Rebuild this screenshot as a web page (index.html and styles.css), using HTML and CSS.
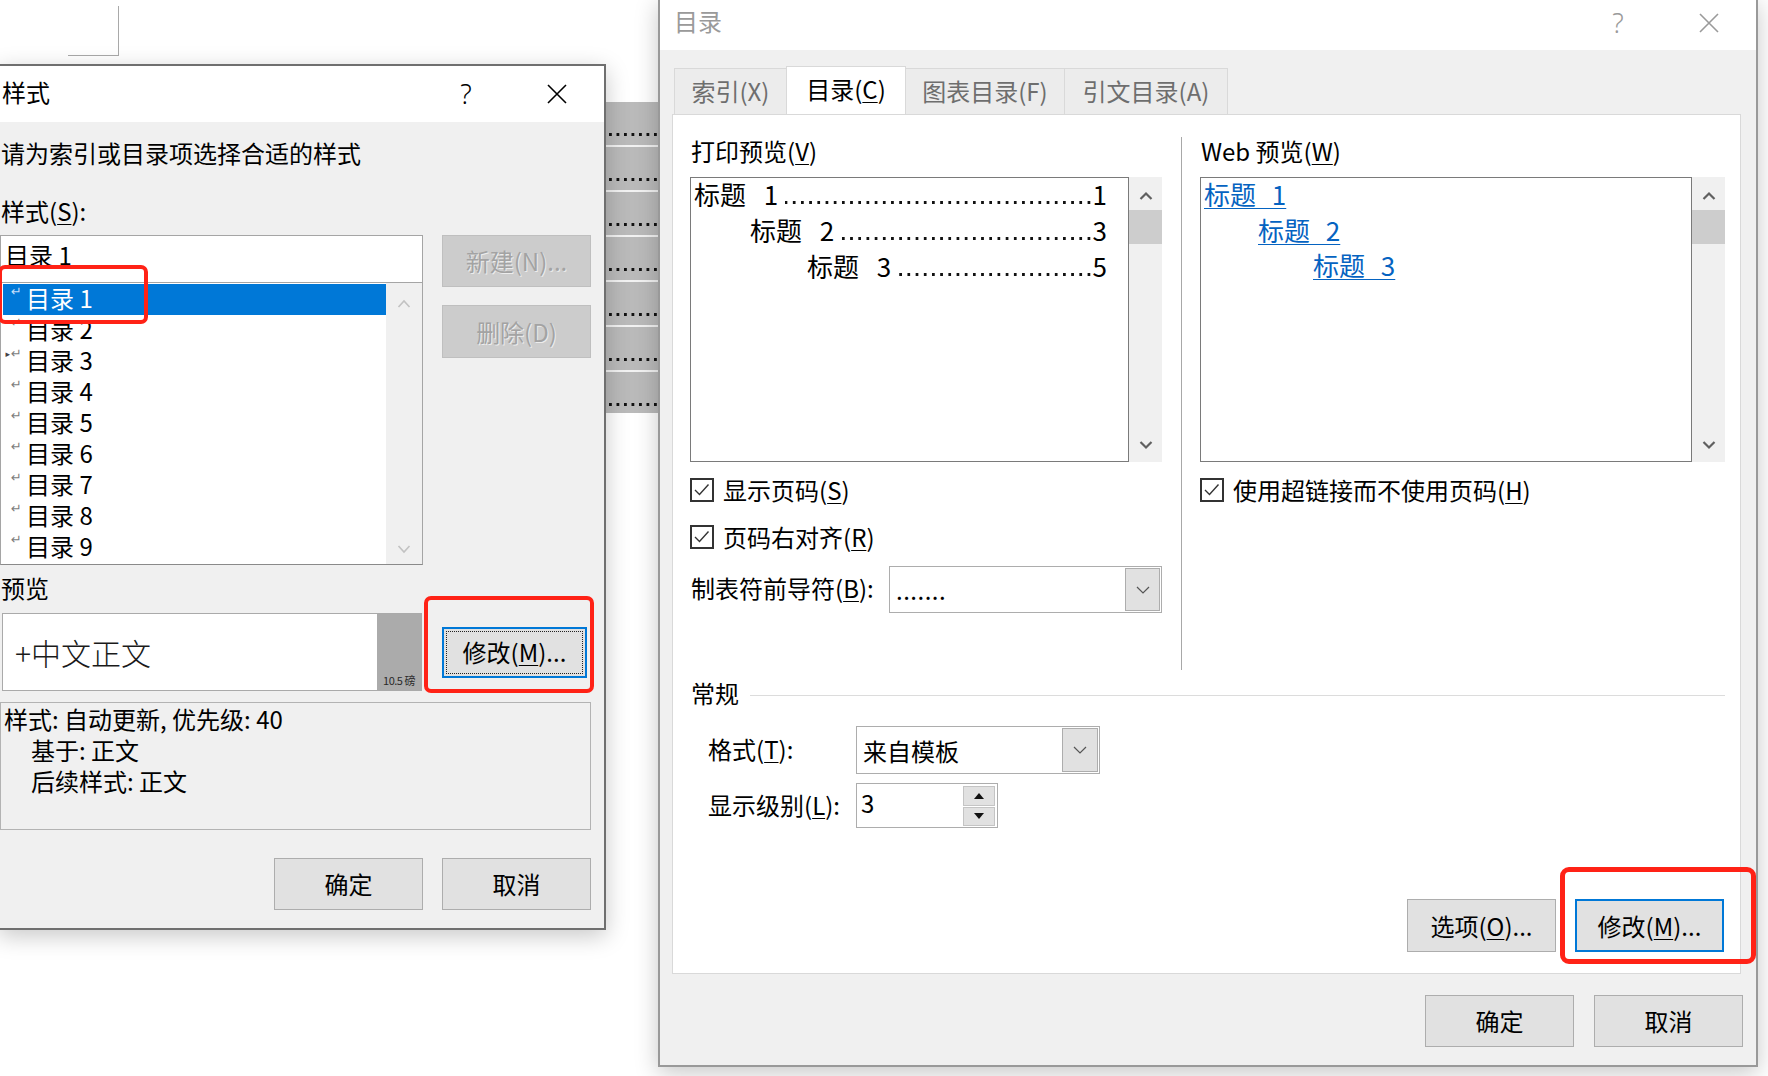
FILE: index.html
```html
<!DOCTYPE html>
<html lang="zh-CN">
<head>
<meta charset="utf-8">
<title>目录</title>
<link rel="stylesheet" href="styles.css">
</head>
<body>
<div class="desktop">
  <div class="page-corner"></div>
  <div class="doc-band">
    <div class="band-row"></div>
    <div class="band-row"></div>
    <div class="band-row"></div>
    <div class="band-row"></div>
    <div class="band-row"></div>
    <div class="band-row"></div>
    <div class="band-row last"></div>
  </div>

  <section class="dlg dlg-styles">
    <header class="titlebar tb-styles">
      <span class="tb-title">样式</span>
      <span class="tb-help">?</span>
      <span class="tb-close"><svg width="20" height="20" viewBox="0 0 20 20"><path d="M1 1L19 19M19 1L1 19" stroke="#000" stroke-width="1.6" fill="none"/></svg></span>
    </header>
    <div class="s-body">
      <div class="s-prompt">请为索引或目录项选择合适的样式</div>
      <div class="s-label">样式(<u>S</u>):</div>
      <div class="s-grid">
        <div class="s-pick">
          <div class="s-input">目录 1</div>
          <div class="s-list">
            <ul class="s-items">
              <li class="sel"><span class="mk">↵</span><span class="it">目录 1</span></li>
              <li><span class="mk">↵</span><span class="it">目录 2</span></li>
              <li><span class="mk"><i class="tri">▸</i>↵</span><span class="it">目录 3</span></li>
              <li><span class="mk">↵</span><span class="it">目录 4</span></li>
              <li><span class="mk">↵</span><span class="it">目录 5</span></li>
              <li><span class="mk">↵</span><span class="it">目录 6</span></li>
              <li><span class="mk">↵</span><span class="it">目录 7</span></li>
              <li><span class="mk">↵</span><span class="it">目录 8</span></li>
              <li><span class="mk">↵</span><span class="it">目录 9</span></li>
            </ul>
            <div class="s-scroll">
              <svg width="14" height="9" viewBox="0 0 14 9"><polyline points="1.5,8 7,2 12.5,8" fill="none" stroke="#c2c2c2" stroke-width="1.6"/></svg>
              <svg width="14" height="9" viewBox="0 0 14 9"><polyline points="1.5,1 7,7 12.5,1" fill="none" stroke="#c2c2c2" stroke-width="1.6"/></svg>
            </div>
          </div>
        </div>
        <div class="s-side">
          <div class="btn disabled btn-new">新建(N)...</div>
          <div class="btn disabled btn-del">删除(D)</div>
        </div>
      </div>
      <div class="s-label s-plabel">预览</div>
      <div class="s-prow">
        <div class="s-pbox">
          <span class="s-ptext">+中文正文</span>
          <div class="s-pstrip"><span>10.5 磅</span></div>
        </div>
        <div class="btn focus s-mod"><span class="focus-rect">修改(<u>M</u>)...</span></div>
      </div>
      <div class="s-desc">
        <div class="d1">样式: 自动更新, 优先级: 40</div>
        <div class="d2">基于: 正文</div>
        <div class="d2">后续样式: 正文</div>
      </div>
      <div class="s-foot">
        <div class="btn fbtn">确定</div>
        <div class="btn fbtn">取消</div>
      </div>
    </div>
  </section>

  <section class="dlg dlg-toc">
    <header class="titlebar tb-toc">
      <span class="tb-title">目录</span>
      <span class="tb-help">?</span>
      <span class="tb-close"><svg width="20" height="20" viewBox="0 0 20 20"><path d="M1 1L19 19M19 1L1 19" stroke="#9a9a9a" stroke-width="1.6" fill="none"/></svg></span>
    </header>
    <div class="t-body">
      <div class="tabs">
        <div class="tab t1">索引(X)</div>
        <div class="tab t2 active">目录(<u>C</u>)</div>
        <div class="tab t3">图表目录(F)</div>
        <div class="tab t4">引文目录(A)</div>
      </div>
      <div class="panel">
        <div class="p-top">
          <div class="p-col p-print">
            <div class="p-label">打印预览(<u>V</u>)</div>
            <div class="pv">
              <div class="pv-box">
                <div class="pl l1"><span>标题 1</span><span class="ld"></span><span>1</span></div>
                <div class="pl l2"><span>标题 2</span><span class="ld"></span><span>3</span></div>
                <div class="pl l3"><span>标题 3</span><span class="ld"></span><span>5</span></div>
              </div>
              <div class="pv-scroll">
                <svg class="up" width="14" height="9" viewBox="0 0 14 9"><polyline points="1.5,8 7,2.5 12.5,8" fill="none" stroke="#606060" stroke-width="2.2"/></svg>
                <div class="thumb"></div>
                <div class="gap"></div>
                <svg class="dn" width="14" height="9" viewBox="0 0 14 9"><polyline points="1.5,1 7,6.5 12.5,1" fill="none" stroke="#606060" stroke-width="2.2"/></svg>
              </div>
            </div>
            <div class="cb cb1">
              <svg width="24" height="24" viewBox="0 0 24 24"><rect x="1" y="1" width="22" height="22" fill="#fff" stroke="#333" stroke-width="2"/><polyline points="5,12 9.5,16.5 18.5,6.5" fill="none" stroke="#333" stroke-width="1.4"/></svg>
              <span>显示页码(<u>S</u>)</span>
            </div>
            <div class="cb cb2">
              <svg width="24" height="24" viewBox="0 0 24 24"><rect x="1" y="1" width="22" height="22" fill="#fff" stroke="#333" stroke-width="2"/><polyline points="5,12 9.5,16.5 18.5,6.5" fill="none" stroke="#333" stroke-width="1.4"/></svg>
              <span>页码右对齐(<u>R</u>)</span>
            </div>
            <div class="leader-row">
              <span class="lr-label">制表符前导符(<u>B</u>):</span>
              <div class="combo lr-combo">
                <span class="combo-val dots">.......</span>
                <span class="combo-btn"><svg width="14" height="8" viewBox="0 0 14 8"><polyline points="1,1 7,7 13,1" fill="none" stroke="#555" stroke-width="1.2"/></svg></span>
              </div>
            </div>
          </div>
          <div class="p-div"></div>
          <div class="p-col p-web">
            <div class="p-label">Web 预览(<u>W</u>)</div>
            <div class="pv">
              <div class="pv-box web">
                <div class="wl w1"><a>标题 1</a></div>
                <div class="wl w2"><a>标题 2</a></div>
                <div class="wl w3"><a>标题 3</a></div>
              </div>
              <div class="pv-scroll">
                <svg class="up" width="14" height="9" viewBox="0 0 14 9"><polyline points="1.5,8 7,2.5 12.5,8" fill="none" stroke="#606060" stroke-width="2.2"/></svg>
                <div class="thumb"></div>
                <div class="gap"></div>
                <svg class="dn" width="14" height="9" viewBox="0 0 14 9"><polyline points="1.5,1 7,6.5 12.5,1" fill="none" stroke="#606060" stroke-width="2.2"/></svg>
              </div>
            </div>
            <div class="cb cb1">
              <svg width="24" height="24" viewBox="0 0 24 24"><rect x="1" y="1" width="22" height="22" fill="#fff" stroke="#333" stroke-width="2"/><polyline points="5,12 9.5,16.5 18.5,6.5" fill="none" stroke="#333" stroke-width="1.4"/></svg>
              <span>使用超链接而不使用页码(<u>H</u>)</span>
            </div>
          </div>
        </div>
        <div class="g-head"><span>常规</span><i class="g-line"></i></div>
        <div class="g-row g-fmt">
          <span class="g-label">格式(<u>T</u>):</span>
          <div class="combo fmt-combo">
            <span class="combo-val">来自模板</span>
            <span class="combo-btn"><svg width="14" height="8" viewBox="0 0 14 8"><polyline points="1,1 7,7 13,1" fill="none" stroke="#555" stroke-width="1.2"/></svg></span>
          </div>
        </div>
        <div class="g-row g-lvl">
          <span class="g-label">显示级别(<u>L</u>):</span>
          <div class="spin">
            <span class="spin-val">3</span>
            <div class="spin-btns">
              <span class="sb"><svg width="10" height="6" viewBox="0 0 10 6"><polygon points="5,0 10,6 0,6" fill="#111"/></svg></span>
              <span class="sb"><svg width="10" height="6" viewBox="0 0 10 6"><polygon points="0,0 10,0 5,6" fill="#111"/></svg></span>
            </div>
          </div>
        </div>
        <div class="p-btns">
          <div class="btn pbtn">选项(<u>O</u>)...</div>
          <div class="btn pbtn focus">修改(<u>M</u>)...</div>
        </div>
      </div>
      <div class="t-foot">
        <div class="btn tbtn">确定</div>
        <div class="btn tbtn">取消</div>
      </div>
    </div>
  </section>

  <div class="mark-box mb1"></div>
  <div class="mark-box mb2"></div>
  <div class="mark-box mb3"></div>
</div>
</body>
</html>
```

FILE: styles.css
```css
* { box-sizing: border-box; }
html, body { margin: 0; padding: 0; }
body {
  width: 1768px;
  height: 1076px;
  overflow: hidden;
  background: #ffffff;
  font-family: "Noto Sans CJK SC", "Noto Sans", sans-serif;
  font-size: 24px;
  color: #000;
}
u { text-decoration-thickness: 1px; text-underline-offset: 3px; }

.desktop {
  position: relative;
  width: 1768px;
  height: 1076px;
  overflow: hidden;
  background: #fff;
}

/* background document */
.page-corner {
  position: absolute;
  left: 68px;
  top: 6px;
  width: 51px;
  height: 50px;
  border-right: 1px solid #a9a9a9;
  border-bottom: 1px solid #a9a9a9;
}
.doc-band {
  position: absolute;
  left: 604px;
  top: 102px;
  width: 56px;
  display: flex;
  flex-direction: column;
}
.band-row {
  height: 45px;
  border-bottom: 2px solid #f2f2f2;
  background-color: #bababa;
  background-image: linear-gradient(90deg, #111 2.6px, transparent 2.6px);
  background-size: 7.5px 3px;
  background-repeat: repeat-x;
  background-position: 5px 31px;
}
.band-row.last { height: 41px; border-bottom: none; }

/* dialogs */
.dlg {
  position: absolute;
  background: #f0f0f0;
  box-shadow: 0 6px 22px rgba(0,0,0,0.22);
}
.dlg-styles {
  left: -2px;
  top: 64px;
  width: 608px;
  height: 866px;
  border: 2px solid #6f6f6f;
  z-index: 2;
}
.dlg-toc {
  left: 658px;
  top: -2px;
  width: 1100px;
  height: 1069px;
  border: 2px solid #999;
  z-index: 1;
}

.titlebar {
  display: flex;
  align-items: center;
  background: #fff;
}
.tb-styles { height: 56px; padding-left: 2px; }
.tb-toc { height: 50px; padding-left: 14px; padding-bottom: 5px; }
.tb-title { flex: 1; line-height: 28px; padding-bottom: 4px; }
.tb-toc .tb-title { color: #9a9a9a; }
.tb-help {
  width: 40px;
  text-align: center;
  font-family: "Noto Sans", sans-serif;
  font-weight: 300;
  font-size: 27px;
  line-height: 32px;
}
.tb-toc .tb-help { color: #9a9a9a; }
.tb-close {
  width: 40px;
  margin-left: 51px;
  margin-right: 27px;
  display: flex;
  justify-content: center;
  align-items: center;
}

/* ---------- styles dialog body ---------- */
.s-body {
  display: flex;
  flex-direction: column;
  padding-right: 13px;
}
.s-prompt { margin-top: 17px; line-height: 28px; padding-bottom: 4px; padding-left: 1px; }
.s-label { margin-top: 26px; line-height: 28px; padding-bottom: 4px; padding-left: 1px; }
.s-grid {
  margin-top: 6px;
  display: grid;
  grid-template-columns: 423px 149px;
  column-gap: 19px;
}
.s-pick { display: flex; flex-direction: column; }
.s-input {
  height: 48px;
  background: #fff;
  border: 1px solid #a5a5a5;
  line-height: 38px;
  padding-bottom: 6px;
  padding-left: 4px;
}
.s-list {
  margin-top: -1px;
  height: 283px;
  background: #fff;
  border: 1px solid #a5a5a5;
  border-bottom-color: #8a8a8a;
  display: flex;
}
.s-items {
  list-style: none;
  margin: 0;
  padding: 1px 0 0 2px;
  width: 385px;
}
.s-items li {
  height: 31px;
  display: flex;
  white-space: pre;
}
.s-items li .it { line-height: 27px; }
.s-items li.sel { background: #0078d7; color: #fff; }
.mk {
  width: 23px;
  font-family: "DejaVu Sans", sans-serif;
  font-size: 13px;
  line-height: 15px;
  color: #7d7d7d;
  display: flex;
  justify-content: flex-end;
  padding-right: 4px;
}
.sel .mk { color: #c4defa; }
.tri { font-style: normal; font-size: 9px; color: #444; margin-right: 1px; line-height: 17px; }
.s-scroll {
  flex: 1;
  background: #f0f0f0;
  display: flex;
  flex-direction: column;
  align-items: center;
  justify-content: space-between;
  padding: 16px 0 10px;
}
.s-side { display: flex; flex-direction: column; gap: 18px; }
.btn {
  display: flex;
  align-items: center;
  justify-content: center;
  background: #e1e1e1;
  border: 1px solid #adadad;
  line-height: 32px;
  white-space: nowrap;
}
.btn.disabled {
  background: #cccccc;
  border-color: #bfbfbf;
  color: #a3a3a3;
  text-shadow: 1px 1px 0 #ececec;
}
.btn-new { height: 52px; }
.btn-del { height: 53px; }
.btn.focus { border: 2px solid #0078d7; }
.s-plabel { margin-top: 9px; }
.s-prow {
  margin-top: 7px;
  height: 78px;
  display: flex;
  align-items: center;
}
.s-pbox {
  margin-left: 2px;
  width: 420px;
  height: 78px;
  background: #fff;
  border: 1px solid #aaaaaa;
  display: flex;
  align-items: center;
}
.s-ptext {
  flex: 1;
  padding-left: 12px;
  font-size: 30px;
  font-weight: 300;
  color: #1a1a1a;
  line-height: 40px;
}
.s-pstrip {
  width: 44px;
  height: 100%;
  background: #ababab;
  display: flex;
  align-items: flex-end;
  justify-content: center;
  padding-bottom: 3px;
}
.s-pstrip span {
  font-size: 11px;
  line-height: 14px;
  color: #2a2a2a;
  white-space: nowrap;
  letter-spacing: -0.5px;
}
.s-mod {
  margin-left: 20px;
  width: 145px;
  height: 51px;
  padding: 2px;
}
.focus-rect {
  flex: 1;
  height: 100%;
  border: 1px dotted #222;
  display: flex;
  align-items: center;
  justify-content: center;
}
.s-desc {
  margin-top: 11px;
  height: 128px;
  border: 1px solid #b3b3b3;
  padding-top: 0;
  line-height: 31px;
}
.s-desc .d1 { padding-left: 3px; }
.s-desc .d2 { padding-left: 30px; }
.s-foot {
  margin-top: 28px;
  display: flex;
  justify-content: flex-end;
  gap: 19px;
}
.fbtn { width: 149px; height: 52px; }

/* ---------- toc dialog body ---------- */
.t-body { display: flex; flex-direction: column; }
.tabs {
  margin-top: 16px;
  margin-left: 14px;
  height: 49px;
  display: flex;
  align-items: flex-end;
}
.tab {
  height: 47px;
  background: #ececec;
  border: 1px solid #d9d9d9;
  border-bottom: none;
  display: flex;
  align-items: center;
  justify-content: center;
  color: #6e6e6e;
  line-height: 32px;
  padding-bottom: 2px;
}
.tab + .tab { margin-left: -1px; }
.tab.t1 { width: 113px; }
.tab.t2 { width: 120px; }
.tab.t3 { width: 160px; }
.tab.t4 { width: 164px; }
.tab.active {
  height: 49px;
  background: #fff;
  color: #000;
  padding-bottom: 4px;
}
.panel {
  margin-top: -1px;
  margin-left: 12px;
  width: 1069px;
  height: 860px;
  background: #fff;
  border: 1px solid #d9d9d9;
  padding: 22px 15px 0 17px;
  display: flex;
  flex-direction: column;
}
.p-top {
  height: 533px;
  display: grid;
  grid-template-columns: 472px 38px 525px;
}
.p-col { display: flex; flex-direction: column; }
.p-div { width: 1px; justify-self: center; background: #a8a8a8; }
.p-label { line-height: 28px; padding-bottom: 4px; padding-left: 1px; }
.pv {
  margin-top: 8px;
  height: 285px;
  display: flex;
}
.pv-box {
  flex: 1;
  background: #fff;
  border: 1px solid #7a7a7a;
  padding: 0 21px 0 3px;
  font-size: 26px;
}
.pv-scroll {
  width: 33px;
  background: #f0f0f0;
  display: flex;
  flex-direction: column;
  align-items: center;
}
.pv-scroll .up { margin-top: 14px; }
.pv-scroll .thumb {
  margin-top: 10px;
  align-self: stretch;
  height: 34px;
  background: #cdcdcd;
}
.pv-scroll .gap { flex: 1; }
.pv-scroll .dn { margin-bottom: 12px; }
.pl {
  height: 36px;
  line-height: 32px;
  padding-bottom: 4px;
  display: flex;
  align-items: baseline;
  word-spacing: 12px;
  white-space: pre;
}
.pl .ld {
  flex: 1;
  height: 3px;
  margin: 0 2px 0 7px;
  background-image: linear-gradient(90deg, transparent 5.2px, #111 5.2px);
  background-size: 8.2px 3px;
  background-repeat: repeat-x;
  background-position: right top;
  position: relative;
  top: -1px;
}
.l2 { padding-left: 56px; }
.l3 { padding-left: 113px; }
.wl {
  height: 35.5px;
  line-height: 32px;
  padding-bottom: 4px;
  word-spacing: 10px;
  white-space: pre;
}
.wl a {
  color: #0563c1;
  text-decoration: underline;
  text-decoration-thickness: 1px;
  text-underline-offset: 3px;
}
.w2 { padding-left: 54px; }
.w3 { padding-left: 109px; }
.cb {
  display: flex;
  align-items: center;
  height: 24px;
  line-height: 24px;
  white-space: nowrap;
}
.cb svg { flex: none; margin-right: 9px; }
.cb1 { margin-top: 16px; }
.cb2 { margin-top: 23px; }
.leader-row {
  margin-top: 17px;
  height: 47px;
  display: flex;
  align-items: center;
}
.lr-label { width: 199px; padding-left: 1px; white-space: nowrap; line-height: 28px; padding-bottom: 4px; }
.combo {
  height: 100%;
  background: #fff;
  border: 1px solid #adadad;
  display: flex;
  align-items: stretch;
  padding: 1px;
}
.lr-combo { flex: 1; }
.combo-val {
  flex: 1;
  padding-left: 5px;
  display: flex;
  align-items: center;
}
.dots { letter-spacing: 0.5px; align-items: flex-end; padding-bottom: 11px; line-height: 20px; }
.combo-btn {
  width: 35px;
  background: #e1e1e1;
  border: 1px solid #adadad;
  display: flex;
  align-items: center;
  justify-content: center;
}
.g-head {
  margin-top: 9px;
  height: 32px;
  display: flex;
  align-items: center;
}
.g-head span { padding-left: 1px; line-height: 28px; padding-bottom: 4px; }
.g-line { flex: 1; height: 1px; background: #dcdcdc; margin-left: 11px; }
.g-row {
  display: flex;
  align-items: center;
  padding-left: 18px;
}
.g-label { width: 148px; white-space: nowrap; line-height: 30px; padding-bottom: 2px; }
.g-fmt { margin-top: 15px; height: 48px; }
.fmt-combo { width: 244px; }
.fmt-combo .combo-val { padding-left: 5px; }
.fmt-combo .combo-btn { width: 36px; }
.g-lvl { margin-top: 9px; height: 45px; }
.spin {
  width: 142px;
  height: 45px;
  background: #fff;
  border: 1px solid #adadad;
  display: flex;
  padding: 2px 2px 1px 0;
}
.spin-val { flex: 1; padding-left: 4px; line-height: 34px; }
.spin-btns { width: 32px; display: flex; flex-direction: column; gap: 1px; }
.sb {
  flex: 1;
  background: #e1e1e1;
  border: 1px solid #c4c4c4;
  display: flex;
  align-items: center;
  justify-content: center;
}
.p-btns {
  margin-top: 71px;
  display: flex;
  justify-content: flex-end;
  gap: 19px;
  padding-right: 1px;
}
.pbtn { width: 149px; height: 53px; }
.t-foot {
  margin-top: 21px;
  display: flex;
  justify-content: flex-end;
  gap: 20px;
  padding-right: 13px;
}
.tbtn { width: 149px; height: 52px; }

/* red annotation boxes */
.mark-box {
  position: absolute;
  border: 4px solid #ff2216;
  border-radius: 7px;
  z-index: 10;
}
.mb1 { left: -2px; top: 265px; width: 150px; height: 59px; }
.mb2 { left: 424px; top: 596px; width: 170px; height: 97px; }
.mb3 { left: 1560px; top: 867px; width: 196px; height: 97px; border-width: 5px; border-radius: 9px; }
```
